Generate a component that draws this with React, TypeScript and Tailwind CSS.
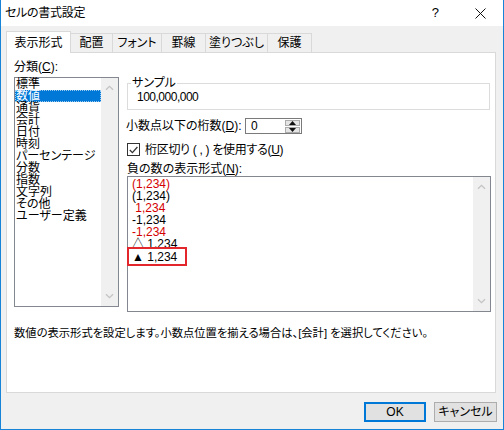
import React from "react";

const categories = [
  "標準",
  "数値",
  "通貨",
  "会計",
  "日付",
  "時刻",
  "パーセンテージ",
  "分数",
  "指数",
  "文字列",
  "その他",
  "ユーザー定義",
];

const tabs = [
  { label: "表示形式", w: "w-[65px]" },
  { label: "配置", w: "w-[43px]" },
  { label: "フォント", w: "w-[50px]" },
  { label: "罫線", w: "w-[45px]" },
  { label: "塗りつぶし", w: "w-[63px]" },
  { label: "保護", w: "w-[45px]" },
];

const negatives = [
  { text: "(1,234)", red: true },
  { text: "(1,234)", red: false },
  { text: "\u00a01,234", red: true },
  { text: "-1,234", red: false },
  { text: "-1,234", red: true },
  { text: "△ 1,234", red: false },
];

function Chevron({ down = false }: { down?: boolean }) {
  return (
    <svg width="9" height="6" viewBox="0 0 9 6" className="block">
      <path
        d={down ? "M1 1.2 L4.5 4.7 L8 1.2" : "M1 4.8 L4.5 1.3 L8 4.8"}
        fill="none"
        stroke="#c4c4c4"
        strokeWidth="1.3"
      />
    </svg>
  );
}

function Scrollbar() {
  return (
    <div className="w-[17px] bg-[#f0f0f0] flex flex-col justify-between items-center py-[7px]">
      <Chevron />
      <Chevron down />
    </div>
  );
}

export default function App() {
  return (
    <div className="w-[504px] h-[430px] flex flex-col border-x border-b border-[#1883d7] bg-[#f0f0f0] text-[12px] text-black font-['Liberation_Sans','Noto_Sans_CJK_JP',sans-serif] [font-feature-settings:'palt']">
      {/* Title bar */}
      <div className="h-[26px] bg-white flex items-center pl-[4px] shrink-0">
        <span className="leading-[12px] tracking-[-0.3px]">セルの書式設定</span>
        <span className="ml-auto mr-[36px] text-[13px] leading-[12px]">?</span>
        <svg width="11" height="11" viewBox="0 0 11 11" className="mr-[17px]">
          <path d="M0.5 0.5 L10.5 10.5 M10.5 0.5 L0.5 10.5" stroke="#111" strokeWidth="1" />
        </svg>
      </div>

      <div className="flex-1 px-[5px]">
        {/* Tabs */}
        <div className="h-[26px] flex items-end">
          {tabs.map((t, i) =>
            i === 0 ? (
              <div
                key={t.label}
                className={`${t.w} h-[22px] -mb-[1px] relative z-10 bg-white border-x border-t border-[#d9d9d9] flex items-center justify-center leading-[12px]`}
              >
                {t.label}
              </div>
            ) : (
              <div
                key={t.label}
                className={`${t.w} h-[19px] -ml-[1px] bg-[#f0f0f0] border-x border-t border-[#d9d9d9] flex items-center justify-center leading-[12px]`}
              >
                {t.label}
              </div>
            )
          )}
        </div>

        {/* Panel */}
        <div className="w-[490px] h-[341px] bg-white border border-[#d9d9d9] flex flex-col">
          <div className="flex pl-[7px]">
            {/* Category column */}
            <div className="w-[105px] flex flex-col">
              <div className="mt-[8px] leading-[12px]">
                分類(<u>C</u>):
              </div>
              <div className="mt-[4px] h-[230px] border border-[#828790] bg-white flex">
                <div className="flex-1">
                  {categories.map((c) =>
                    c === "数値" ? (
                      <div
                        key={c}
                        className="h-[12px] leading-[10px] bg-[#0078d7] text-white border border-dotted border-[#9ccaf0]"
                      >
                        {c}
                      </div>
                    ) : (
                      <div key={c} className="h-[12px] leading-[12px] pl-[1px]">
                        {c}
                      </div>
                    )
                  )}
                </div>
                <Scrollbar />
              </div>
            </div>

            {/* Options column */}
            <div className="ml-[8px] w-[364px] flex flex-col">
              <div className="relative mt-[30px] h-[27px] w-[363px] border border-[#dcdcdc]">
                <span className="absolute -top-[7px] left-[3px] bg-white px-[1px] leading-[12px]">
                  サンプル
                </span>
                <div className="pt-[7px] pl-[9px] leading-[12px] tracking-[-0.5px]">100,000,000</div>
              </div>

              <div className="mt-[8px] h-[16px] flex items-center">
                <span className="w-[119px] -ml-[1px] leading-[12px]">
                  小数点以下の桁数(<u>D</u>):
                </span>
                <div className="w-[57px] h-[16px] border border-[#7a7a7a] flex bg-white">
                  <span className="flex-1 pl-[5px] leading-[14px]">0</span>
                  <div className="w-[15px] flex flex-col gap-[1px] my-[1px] mr-[1px]">
                    <div className="flex-1 bg-[#e5e5e5] border border-[#acacac] flex items-center justify-center">
                      <svg width="7" height="4" viewBox="0 0 7 4">
                        <path d="M0 4 L3.5 0 L7 4 Z" fill="#111" />
                      </svg>
                    </div>
                    <div className="flex-1 bg-[#e5e5e5] border border-[#acacac] flex items-center justify-center">
                      <svg width="7" height="4" viewBox="0 0 7 4">
                        <path d="M0 0 L3.5 4 L7 0 Z" fill="#111" />
                      </svg>
                    </div>
                  </div>
                </div>
              </div>

              <div className="mt-[9px] h-[13px] flex items-center">
                <div className="w-[13px] h-[13px] border border-[#333] bg-white flex items-center justify-center">
                  <svg width="9" height="8" viewBox="0 0 9 8">
                    <path d="M0.8 4 L3.4 6.6 L8.4 1" fill="none" stroke="#333" strokeWidth="1.3" />
                  </svg>
                </div>
                <span className="ml-[5px] leading-[12px] tracking-[-0.3px]">
                  桁区切り ( , ) を使用する(<u>U</u>)
                </span>
              </div>

              <div className="mt-[7px] leading-[12px]">
                負の数の表示形式(<u>N</u>):
              </div>

              <div className="mt-[1px] h-[136px] border border-[#828790] bg-white flex">
                <div className="flex-1 pt-[1px] px-[4px]">
                  {negatives.map((n, i) => (
                    <div
                      key={i}
                      className={`h-[12px] leading-[12px] ${n.red ? "text-[#d40000]" : "text-black"}`}
                    >
                      {n.text}
                    </div>
                  ))}
                  <div className="relative z-10 -mt-[3px] -ml-[5px] w-[60px] h-[19px] border-2 border-[#e3262c] bg-white flex items-center pl-[3px] leading-[12px]">
                    ▲ 1,234
                  </div>
                </div>
                <Scrollbar />
              </div>
            </div>
          </div>

          <p className="mt-[15px] pl-[7px] leading-[12px] text-[11.3px]">
            数値の表示形式を設定します。小数点位置を揃える場合は、[会計] を選択してください。
          </p>
        </div>

        {/* Buttons */}
        <div className="mt-[9px] flex justify-end gap-[8px] pr-[1px]">
          <button className="w-[62px] h-[20px] border-2 border-[#0078d7] bg-[#e1e1e1] leading-[12px]">
            OK
          </button>
          <button className="w-[63px] h-[20px] border border-[#adadad] bg-[#e1e1e1] leading-[12px]">
            キャンセル
          </button>
        </div>
      </div>
    </div>
  );
}
